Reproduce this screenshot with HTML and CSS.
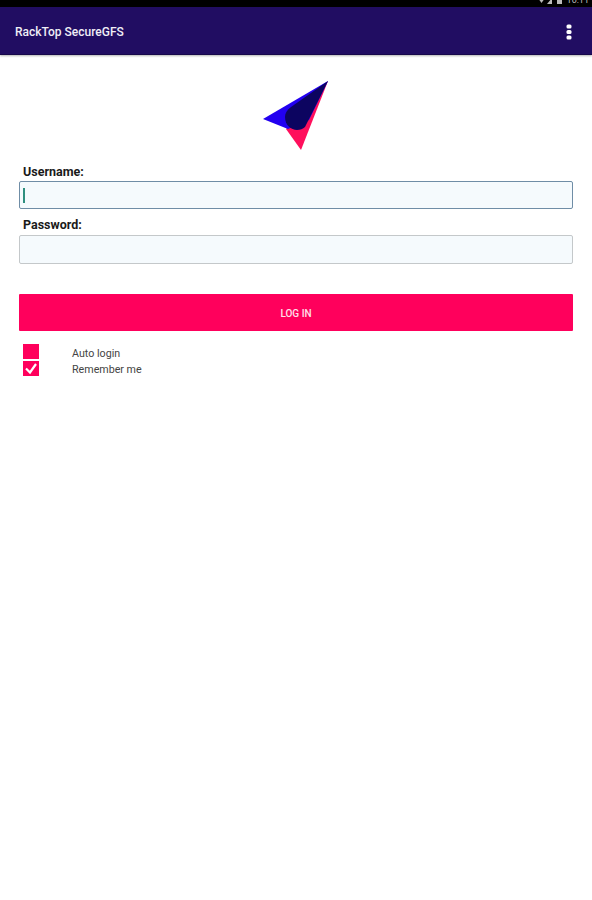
FILE: index.html
```html
<!DOCTYPE html>
<html lang="en">
<head>
<meta charset="utf-8">
<title>RackTop SecureGFS</title>
<link rel="stylesheet" href="styles.css">
</head>
<body>
<div class="status-bar">
  <svg class="status-icons" width="26" height="7" viewBox="0 0 26 7"><path d="M1 0h7L4.500 5z" fill="#bbb"/><path d="M10 6l5-6v6z" fill="#bbb"/><rect x="20" y="0" width="5" height="6" fill="#bbb"/></svg>
  <span class="clock">10:11</span>
</div>
<header class="app-bar">
  <span class="app-title">RackTop SecureGFS</span>
  <svg class="overflow" width="6" height="16" viewBox="0 0 6 16"><rect x="0.500" y="0.500" width="5" height="4" rx="1.500" fill="#fff"/><rect x="0.500" y="6" width="5" height="4" rx="1.500" fill="#fff"/><rect x="0.500" y="11.500" width="5" height="4" rx="1.500" fill="#fff"/></svg>
</header>
<main class="content">
  <div class="logo-row">
    <svg class="logo" width="66" height="72" viewBox="0 0 66 72">
      <path d="M65 1L38 70L23 49z" fill="#ff0f5c"/>
      <path d="M65 1L0 39L25 49L46 40z" fill="#2200f0"/>
      <path d="M65 1L28 27C24 30 22 33 22 37C22 45 28 50 34 50C37 50 40 49 42 47z" fill="#0c0460"/>
    </svg>
  </div>
  <label class="field-label">Username:</label>
  <div class="input input-focus"><span class="caret"></span></div>
  <label class="field-label label-second">Password:</label>
  <div class="input"></div>
  <button class="login">LOG IN</button>
  <div class="options">
    <div class="option">
      <span class="box"></span>
      <span class="option-text">Auto login</span>
    </div>
    <div class="option">
      <span class="box"><svg width="16" height="15" viewBox="0 0 16 15"><path d="M3 7.500l4 4L13 3" fill="none" stroke="#fff" stroke-width="2.200"/></svg></span>
      <span class="option-text">Remember me</span>
    </div>
  </div>
</main>
</body>
</html>
```
FILE: styles.css
```css
* { box-sizing: border-box; }
html, body { margin: 0; padding: 0; }
body {
  width: 592px;
  height: 900px;
  background: #fff;
  font-family: "Roboto", "Liberation Sans", sans-serif;
  overflow: hidden;
}
.status-bar {
  height: 7px;
  background: #000;
  display: flex;
  justify-content: flex-end;
  align-items: flex-start;
  gap: 4px;
  padding-right: 3px;
  overflow: hidden;
}
.status-icons { margin-top: -2px; }
.clock {
  font-size: 9px;
  line-height: 9px;
  color: #bbb;
  margin-top: -4px;
}
.app-bar {
  height: 48px;
  background: #210d62;
  border-bottom: 1px solid #17084a;
  box-shadow: 0 1px 2px rgba(0,0,0,.3);
  display: flex;
  align-items: center;
  justify-content: space-between;
  padding: 2px 20px 0 15px;
}
.app-title {
  color: #f0eef6;
  font-size: 12px;
  font-weight: 500;
}
.overflow { display: block; }
.content { padding: 25px 19px 0; }
.logo-row {
  display: flex;
  justify-content: center;
}
.logo { display: block; }
.field-label {
  display: block;
  font-size: 12.500px;
  line-height: 14px;
  font-weight: 700;
  color: #1a1a1a;
  margin: 13px 0 2px 4px;
}
.label-second { margin-top: 9px; margin-bottom: 3px; }
.input {
  height: 29px;
  background: #f5fafd;
  border: 1px solid #c4c8ca;
  border-radius: 2px;
  display: flex;
  align-items: center;
  padding-left: 3px;
}
.input-focus { height: 28px; border-color: #6f8da6; }
.caret { width: 1.500px; height: 15px; background: #2f8f7f; }
.login {
  display: block;
  width: 100%;
  height: 37px;
  margin-top: 30px;
  padding-top: 3px;
  background: #ff005c;
  border: 0;
  border-radius: 1px;
  color: #ffe0ea;
  font-family: inherit;
  font-size: 10px;
  font-weight: 500;
}
.options { margin-top: 13px; padding-left: 4px; }
.option {
  display: flex;
  align-items: flex-start;
  height: 16.500px;
}
.box {
  width: 16px;
  height: 15px;
  background: #ff005c;
  flex: none;
  display: block;
}
.box svg { display: block; }
.option-text {
  margin-left: 33px;
  font-size: 10.700px;
  line-height: 13px;
  padding-top: 3px;
  color: #444;
}
.option + .option .option-text { padding-top: 2px; }
```
